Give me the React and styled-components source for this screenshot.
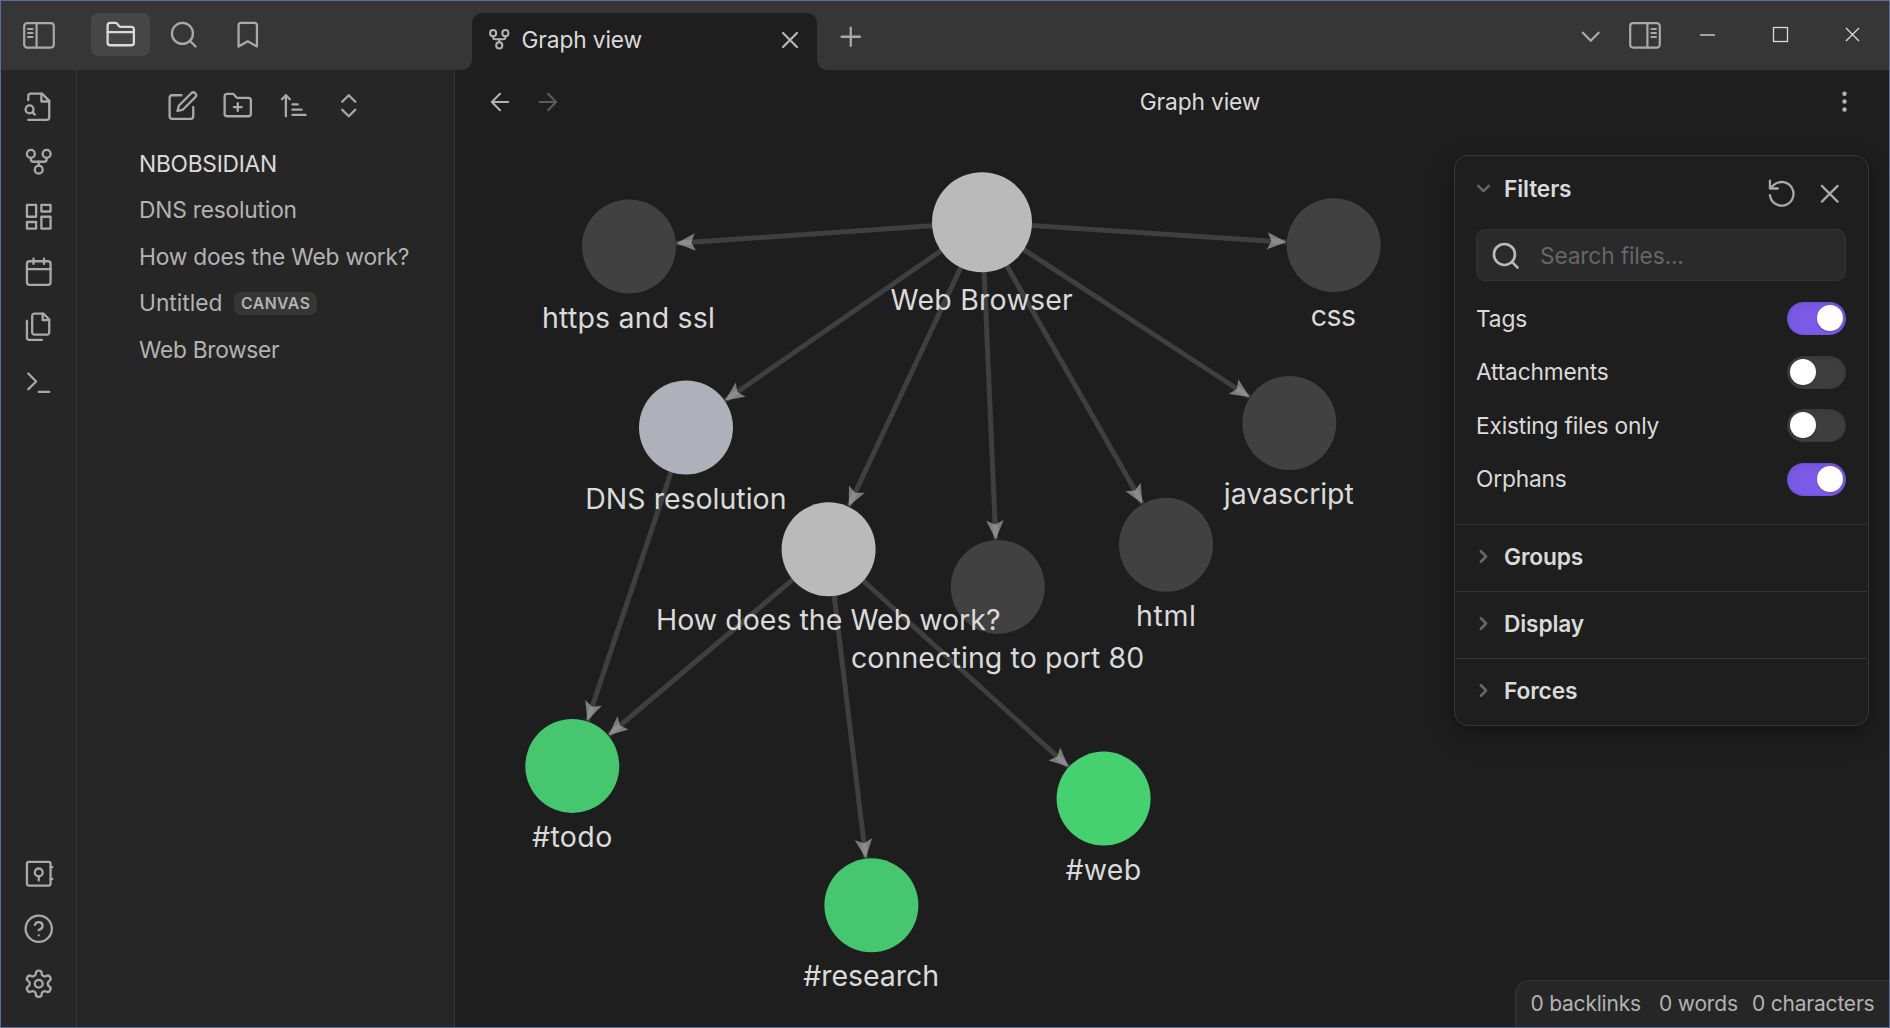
import React from "react";
import styled, { createGlobalStyle, css } from "styled-components";

const GlobalStyle = createGlobalStyle`
  *, *::before, *::after { box-sizing: border-box; }
  body {
    margin: 0;
    background: #1e1e1e;
    font-family: Inter, "Liberation Sans", sans-serif;
    overflow: hidden;
  }
`;

const c = {
  title: "#363636",
  side: "#262626",
  main: "#1e1e1e",
  line: "#363636",
  text: "#dadada",
  muted: "#b3b3b3",
  icon: "#a9a9a9",
  faint: "#666666",
  accent: "#7c5ae8",
};

/* ---------- icons ---------- */

const Svg = styled.svg`
  display: block;
  flex: none;
  width: ${(p) => p.$size}px;
  height: ${(p) => p.$size}px;
  fill: none;
  stroke: currentColor;
  stroke-width: ${(p) => p.$weight};
  stroke-linecap: round;
  stroke-linejoin: round;
`;

const paths = {
  fileSearch: (
    <>
      <path d="M4 22h14a2 2 0 0 0 2-2V7.5L14.5 2H6a2 2 0 0 0-2 2v3" />
      <path d="M14 2v6h6" />
      <circle cx="5" cy="14" r="3" />
      <path d="m9 18-1.5-1.5" />
    </>
  ),
  fork: (
    <>
      <circle cx="12" cy="18" r="3" />
      <circle cx="6" cy="6" r="3" />
      <circle cx="18" cy="6" r="3" />
      <path d="M18 9v1a2 2 0 0 1-2 2H8a2 2 0 0 1-2-2V9" />
      <path d="M12 12v3" />
    </>
  ),
  dashboard: (
    <>
      <rect x="3" y="3" width="7" height="9" />
      <rect x="14" y="3" width="7" height="5" />
      <rect x="14" y="12" width="7" height="9" />
      <rect x="3" y="16" width="7" height="5" />
    </>
  ),
  calendar: (
    <>
      <rect x="3" y="4" width="18" height="18" rx="2" />
      <path d="M16 2v4M8 2v4M3 10h18" />
    </>
  ),
  files: (
    <>
      <path d="M15.5 2H8.6c-.4 0-.8.2-1.1.5-.3.3-.5.7-.5 1.1v12.8c0 .4.2.8.5 1.1.3.3.7.5 1.1.5h9.8c.4 0 .8-.2 1.1-.5.3-.3.5-.7.5-1.1V6.5L15.5 2z" />
      <path d="M3 7.6v12.8c0 .4.2.8.5 1.1.3.3.7.5 1.1.5h9.8" />
      <path d="M15 2v5h5" />
    </>
  ),
  terminal: <path d="m4 17 6-6-6-6M12 19h8" />,
  vault: (
    <>
      <rect x="3" y="3" width="18" height="18" rx="1.5" />
      <circle cx="12" cy="11" r="3" />
      <path d="M12 14v3.2M21 7h1.3M21 16h1.3" />
    </>
  ),
  help: (
    <>
      <circle cx="12" cy="12" r="10" />
      <path d="M9.09 9a3 3 0 0 1 5.83 1c0 2-3 3-3 3M12 17h.01" />
    </>
  ),
  settings: (
    <>
      <path d="M12.22 2h-.44a2 2 0 0 0-2 2v.18a2 2 0 0 1-1 1.73l-.43.25a2 2 0 0 1-2 0l-.15-.08a2 2 0 0 0-2.73.73l-.22.38a2 2 0 0 0 .73 2.73l.15.1a2 2 0 0 1 1 1.72v.51a2 2 0 0 1-1 1.74l-.15.09a2 2 0 0 0-.73 2.73l.22.38a2 2 0 0 0 2.73.73l.15-.08a2 2 0 0 1 2 0l.43.25a2 2 0 0 1 1 1.73V20a2 2 0 0 0 2 2h.44a2 2 0 0 0 2-2v-.18a2 2 0 0 1 1-1.73l.43-.25a2 2 0 0 1 2 0l.15.08a2 2 0 0 0 2.73-.73l.22-.39a2 2 0 0 0-.73-2.73l-.15-.08a2 2 0 0 1-1-1.74v-.5a2 2 0 0 1 1-1.74l.15-.09a2 2 0 0 0 .73-2.73l-.22-.38a2 2 0 0 0-2.73-.73l-.15.08a2 2 0 0 1-2 0l-.43-.25a2 2 0 0 1-1-1.73V4a2 2 0 0 0-2-2z" />
      <circle cx="12" cy="12" r="3" />
    </>
  ),
  folder: (
    <>
      <path d="M4 20h16a2 2 0 0 0 2-2V8a2 2 0 0 0-2-2h-7.93a2 2 0 0 1-1.66-.9l-.82-1.2A2 2 0 0 0 7.93 3H4a2 2 0 0 0-2 2v13c0 1.1.9 2 2 2Z" />
      <path d="M2 10h20" />
    </>
  ),
  folderPlus: (
    <>
      <path d="M4 20h16a2 2 0 0 0 2-2V8a2 2 0 0 0-2-2h-7.93a2 2 0 0 1-1.66-.9l-.82-1.2A2 2 0 0 0 7.93 3H4a2 2 0 0 0-2 2v13c0 1.1.9 2 2 2Z" />
      <path d="M12 10v6M9 13h6" />
    </>
  ),
  search: (
    <>
      <circle cx="11" cy="11" r="8" />
      <path d="m21 21-4.3-4.3" />
    </>
  ),
  bookmark: <path d="m19 21-7-4-7 4V5a2 2 0 0 1 2-2h10a2 2 0 0 1 2 2v16z" />,
  edit: (
    <>
      <path d="M11 4H4a2 2 0 0 0-2 2v14a2 2 0 0 0 2 2h14a2 2 0 0 0 2-2v-7" />
      <path d="M18.5 2.5a2.121 2.121 0 0 1 3 3L12 15l-4 1 1-4 9.5-9.5z" />
    </>
  ),
  sort: <path d="M11 11h4M11 15h7M11 19h10M9 7 6 4 3 7M6 4v16" />,
  upDown: <path d="m7 15 5 5 5-5M7 9l5-5 5 5" />,
  close: <path d="M18 6 6 18M6 6l12 12" />,
  plus: <path d="M5 12h14M12 5v14" />,
  down: <path d="m6 9 6 6 6-6" />,
  right: <path d="m9 18 6-6-6-6" />,
  back: <path d="m12 19-7-7 7-7M19 12H5" />,
  forward: <path d="M5 12h14M12 5l7 7-7 7" />,
  more: (
    <>
      <circle cx="12" cy="12" r="1" />
      <circle cx="12" cy="5" r="1" />
      <circle cx="12" cy="19" r="1" />
    </>
  ),
  reset: <path d="M3 2v6h6M3 13a9 9 0 1 0 3-7.7L3 8" />,
};

const Icon = ({ name, size = 31.5, weight = 1.75 }) => (
  <Svg viewBox="0 0 24 24" $size={size} $weight={weight}>
    {paths[name]}
  </Svg>
);

const PanelSvg = styled.svg`
  display: block;
  flex: none;
  width: 32px;
  height: 27px;
  fill: none;
  stroke: currentColor;
  stroke-width: 2.2;
  stroke-linecap: round;
  transform: ${(p) => (p.$flip ? "scaleX(-1)" : "none")};
`;

const PanelIcon = ({ flip }) => (
  <PanelSvg viewBox="0 0 32 27" $flip={flip}>
    <rect x="1.2" y="1.2" width="29.6" height="24.4" rx="3" />
    <path d="M13.6 1.2v24.4" />
    <path d="M5 7h4.6M5 11h4.6M5 15h4.6" strokeWidth="2" />
  </PanelSvg>
);

/* ---------- window frame ---------- */

const Window = styled.div`
  width: 1890px;
  height: 1028px;
  border: 1px solid #5d6b9e;
  background: ${c.main};
  color: ${c.text};
  display: flex;
  flex-direction: column;
  font-size: 22.75px;
  letter-spacing: -0.2px;
  line-height: 30px;
`;

const TitleBar = styled.header`
  height: 69px;
  flex: none;
  display: flex;
  align-items: center;
  background: ${c.title};
  color: ${c.icon};
`;

const TitleLeft = styled.div`
  width: 471px;
  flex: none;
  display: flex;
  align-items: center;
  padding-left: 22px;
`;

const SideTabs = styled.div`
  display: flex;
  gap: 4.7px;
  margin: 0 0 2px 36px;
`;

const SideTab = styled.button`
  width: 59px;
  height: 43px;
  padding: 0;
  border: 0;
  border-radius: 7px;
  display: grid;
  place-items: center;
  background: ${(p) => (p.$active ? "#464646" : "transparent")};
  color: ${(p) => (p.$active ? c.text : c.icon)};
`;

const flare = css`
  content: "";
  position: absolute;
  bottom: 0;
  width: 10px;
  height: 10px;
`;

const Tab = styled.div`
  position: relative;
  align-self: flex-end;
  width: 345px;
  height: 57px;
  padding: 0 13px 4px 15px;
  display: flex;
  align-items: center;
  gap: 10px;
  border-radius: 10px 10px 0 0;
  background: ${c.main};
  color: ${c.muted};
  &::before {
    ${flare}
    right: 100%;
    background: radial-gradient(circle at 0 0, transparent 9.5px, ${c.main} 10px);
  }
  &::after {
    ${flare}
    left: 100%;
    background: radial-gradient(circle at 100% 0, transparent 9.5px, ${c.main} 10px);
  }
`;

const TabLabel = styled.span`
  flex: 1;
  color: ${c.text};
  letter-spacing: -0.14px;
`;

const NewTab = styled.div`
  margin: 2px 0 0 17.7px;
`;

const TitleRight = styled.div`
  margin-left: auto;
  display: flex;
  align-items: center;
`;

const TabList = styled.div`
  margin: 2px 23px 0 0;
`;

const WindowButtons = styled.div`
  display: flex;
  margin: 0 0 2px 10.5px;
  color: ${c.text};
`;

const WindowButton = styled.div`
  width: 72.5px;
  height: 33px;
  display: grid;
  place-items: center;
`;

const WinSvg = styled.svg`
  display: block;
  width: 17px;
  height: 17px;
  fill: none;
  stroke: currentColor;
  stroke-width: 1.3;
`;

const Body = styled.div`
  flex: 1;
  min-height: 0;
  display: flex;
`;

/* ---------- ribbon ---------- */

const Ribbon = styled.nav`
  width: 76px;
  flex: none;
  border-right: 1px solid ${c.line};
  background: ${c.side};
  color: ${c.icon};
  display: flex;
  flex-direction: column;
  justify-content: space-between;
  align-items: center;
  padding: 20.6px 0 27.75px;
`;

const RibbonGroup = styled.div`
  display: flex;
  flex-direction: column;
  gap: ${(p) => p.$gap}px;
`;

/* ---------- file explorer ---------- */

const Sidebar = styled.aside`
  width: 378px;
  flex: none;
  border-right: 1px solid ${c.line};
  background: ${c.side};
  padding-top: 20.4px;
`;

const SidebarTools = styled.div`
  display: flex;
  justify-content: center;
  gap: 23.9px;
  padding-left: 0.6px;
  color: ${c.icon};
`;

const FileList = styled.div`
  padding: 18.6px 0 0 62px;
`;

const FileRow = styled.div`
  height: 46.5px;
  display: flex;
  align-items: center;
  gap: 12px;
  color: ${(p) => (p.$root ? c.text : c.muted)};
`;

const FileName = styled.span`
  letter-spacing: ${(p) => (p.$spacing === undefined ? -0.2 : p.$spacing)}px;
`;

const Badge = styled.span`
  height: 23px;
  padding: 0 6.5px;
  border-radius: 7px;
  background: ${c.line};
  font-size: 15.75px;
  font-weight: 600;
  line-height: 23px;
  letter-spacing: 0.5px;
`;

/* ---------- graph pane ---------- */

const Pane = styled.main`
  flex: 1;
  min-width: 0;
  position: relative;
  display: flex;
  flex-direction: column;
`;

const ViewHeader = styled.div`
  height: 63px;
  flex: none;
  display: flex;
  align-items: center;
  padding: 0 31px;
  color: ${c.muted};
`;

const NavButtons = styled.div`
  display: flex;
  gap: 20px;
`;

const NavButton = styled.div`
  color: ${(p) => (p.$disabled ? "#5c5c5c" : c.muted)};
`;

const ViewTitle = styled.div`
  flex: 1;
  padding-left: 7px;
  text-align: center;
  color: ${c.text};
  letter-spacing: -0.14px;
`;

const GraphSvg = styled.svg`
  display: block;
  flex: 1;
  width: 1434px;
  height: 894px;
`;

const Label = styled.text`
  font-size: 28.5px;
  letter-spacing: 0;
  text-anchor: middle;
  fill: ${c.text};
`;

const nodes = {
  browser: { x: 982, y: 222.3, r: 50, fill: "#bababa", label: "Web Browser", lx: 981.7, ly: 309.6, w: 182.2 },
  https: { x: 629, y: 246.5, r: 47, fill: "#414141", label: "https and ssl", lx: 628.5, ly: 327.5, w: 173 },
  css: { x: 1333.7, y: 245.2, r: 47, fill: "#414141", label: "css", lx: 1333.4, ly: 326.2, w: 45.5 },
  dns: { x: 686, y: 427.5, r: 47, fill: "#b0b0ba", label: "DNS resolution", lx: 685.9, ly: 508.7, w: 201.2 },
  js: { x: 1289.3, y: 423, r: 47, fill: "#414141", label: "javascript", lx: 1288.8, ly: 503.8, w: 130 },
  port: { x: 997.8, y: 586.9, r: 47, fill: "#414141", label: "connecting to port 80", lx: 997.6, ly: 667.8, w: 293.4 },
  html: { x: 1166, y: 544.8, r: 47, fill: "#414141", label: "html", lx: 1165.9, ly: 625.7, w: 60 },
  how: { x: 828.6, y: 549.3, r: 47, fill: "#bababa", label: "How does the Web work?", lx: 828.3, ly: 629.9, w: 344.5 },
  todo: { x: 572.3, y: 765.9, r: 47, fill: "#47c670", label: "#todo", lx: 572.1, ly: 846.7, w: 80.3 },
  research: { x: 871.4, y: 905.3, r: 47, fill: "#47c670", label: "#research", lx: 871.2, ly: 986, w: 135.8 },
  web: { x: 1103.6, y: 798.6, r: 47, fill: "#46d171", label: "#web", lx: 1103.3, ly: 879.7, w: 75.8 },
};

const links = [
  ["browser", "https"],
  ["browser", "css"],
  ["browser", "dns"],
  ["browser", "js"],
  ["browser", "how"],
  ["browser", "port"],
  ["browser", "html"],
  ["dns", "todo"],
  ["how", "todo"],
  ["how", "research"],
  ["how", "web"],
];

const Link = ({ from, to }) => {
  const a = nodes[from];
  const b = nodes[to];
  const angle = Math.atan2(b.y - a.y, b.x - a.x);
  const tipX = b.x - Math.cos(angle) * (b.r + 0.5);
  const tipY = b.y - Math.sin(angle) * (b.r + 0.5);
  return (
    <g>
      <line x1={a.x} y1={a.y} x2={tipX} y2={tipY} stroke="#3f3f3f" strokeWidth="5" />
      <path
        d="M0 0-19-8.7-15 0-19 8.7Z"
        fill="#dadada"
        fillOpacity="0.5"
        transform={`translate(${tipX} ${tipY}) rotate(${(angle * 180) / Math.PI})`}
      />
    </g>
  );
};

const Graph = () => (
  <GraphSvg viewBox="455 133 1434 894">
    {links.map(([from, to]) => (
      <Link key={from + to} from={from} to={to} />
    ))}
    {Object.entries(nodes).map(([id, n]) => (
      <circle key={id} cx={n.x} cy={n.y} r={n.r} fill={n.fill} />
    ))}
    {Object.entries(nodes).map(([id, n]) => (
      <Label key={id} x={n.lx} y={n.ly} textLength={n.w}>
        {n.label}
      </Label>
    ))}
  </GraphSvg>
);

/* ---------- graph controls ---------- */

const Controls = styled.section`
  position: absolute;
  top: 85px;
  right: 20px;
  width: 415px;
  height: 571px;
  padding: 0 1px;
  border: 1px solid ${c.line};
  border-radius: 14px;
  background: ${c.main};
  box-shadow: 0 3px 6px rgba(0, 0, 0, 0.12), 0 10px 28px rgba(0, 0, 0, 0.28);
`;

const FilterSection = styled.div`
  height: 368px;
  padding: 0 21px 0 20px;
`;

const FilterHeader = styled.div`
  height: 73px;
  display: flex;
  justify-content: space-between;
  align-items: flex-start;
`;

const SectionTitle = styled.div`
  display: flex;
  align-items: center;
  gap: 10px;
  margin-left: -3px;
  color: ${c.faint};
  padding-top: ${(p) => p.$top || 0}px;
`;

const SectionLabel = styled.span`
  color: ${c.text};
  font-weight: 600;
  letter-spacing: -0.15px;
`;

const FilterActions = styled.div`
  display: flex;
  gap: 16.5px;
  padding: 21.6px 0.4px 0 0;
  color: ${c.icon};
`;

const SearchBox = styled.div`
  height: 52px;
  padding: 1px 13px 0 12.7px;
  display: flex;
  align-items: center;
  gap: 18.8px;
  border: 1px solid #333333;
  border-radius: 9px;
  background: #2a2a2a;
  color: #bababa;
`;

const Placeholder = styled.span`
  color: ${c.faint};
  letter-spacing: -0.17px;
`;

const Options = styled.div`
  padding-top: 10.8px;
`;

const Option = styled.div`
  height: 53.5px;
  display: flex;
  align-items: center;
  justify-content: space-between;
`;

const Toggle = styled.div`
  width: 59px;
  height: 33px;
  padding: 3px 3.5px 3px 3px;
  display: flex;
  justify-content: ${(p) => (p.$on ? "flex-end" : "flex-start")};
  border-radius: 17px;
  background: ${(p) => (p.$on ? c.accent : "#3f3f3f")};
  box-shadow: inset 0 4px 9px rgba(0, 0, 0, 0.07), inset 0 0 2px rgba(0, 0, 0, 0.21);
`;

const Thumb = styled.div`
  width: 26px;
  height: 26px;
  border-radius: 50%;
  background: #ffffff;
  box-shadow: 0 1px 2px rgba(0, 0, 0, 0.2);
`;

const Section = styled.div`
  height: 67px;
  padding: 0 20px 3px;
  display: flex;
  align-items: center;
  border-top: 1px solid ${c.line};
`;

const options = [
  ["Tags", true],
  ["Attachments", false],
  ["Existing files only", false],
  ["Orphans", true],
];

/* ---------- status bar ---------- */

const StatusBar = styled.footer`
  position: absolute;
  right: 0;
  bottom: 0;
  width: 374px;
  height: 47px;
  padding-left: 14.4px;
  display: flex;
  align-items: center;
  border: 1px solid ${c.line};
  border-width: 1px 0 0 1px;
  border-radius: 14px 0 0 0;
  background: ${c.side};
  color: ${c.muted};
  font-size: 21px;
  white-space: nowrap;
`;

const StatusItem = styled.span`
  margin-right: ${(p) => p.$after}px;
`;

export default function App() {
  return (
    <>
      <GlobalStyle />
      <Window>
        <TitleBar>
          <TitleLeft>
            <PanelIcon />
            <SideTabs>
              <SideTab $active><Icon name="folder" /></SideTab>
              <SideTab><Icon name="search" /></SideTab>
              <SideTab><Icon name="bookmark" /></SideTab>
            </SideTabs>
          </TitleLeft>
          <Tab>
            <Icon name="fork" size={24.5} weight={2} />
            <TabLabel>Graph view</TabLabel>
            <Icon name="close" size={28} weight={2} />
          </Tab>
          <NewTab><Icon name="plus" /></NewTab>
          <TitleRight>
            <TabList><Icon name="down" /></TabList>
            <PanelIcon flip />
            <WindowButtons>
              <WindowButton>
                <WinSvg viewBox="0 0 17 17"><path d="M1 9h15" /></WinSvg>
              </WindowButton>
              <WindowButton>
                <WinSvg viewBox="0 0 17 17"><rect x="1.5" y="1.5" width="14" height="14" /></WinSvg>
              </WindowButton>
              <WindowButton>
                <WinSvg viewBox="0 0 17 17"><path d="m2 2 13 13M15 2 2 15" /></WinSvg>
              </WindowButton>
            </WindowButtons>
          </TitleRight>
        </TitleBar>
        <Body>
          <Ribbon>
            <RibbonGroup $gap={23.7}>
              <Icon name="fileSearch" />
              <Icon name="fork" />
              <Icon name="dashboard" />
              <Icon name="calendar" />
              <Icon name="files" />
              <Icon name="terminal" />
            </RibbonGroup>
            <RibbonGroup $gap={23.4}>
              <Icon name="vault" />
              <Icon name="help" />
              <Icon name="settings" />
            </RibbonGroup>
          </Ribbon>
          <Sidebar>
            <SidebarTools>
              <Icon name="edit" />
              <Icon name="folderPlus" />
              <Icon name="sort" />
              <Icon name="upDown" />
            </SidebarTools>
            <FileList>
              <FileRow $root><FileName $spacing={-0.25}>NBOBSIDIAN</FileName></FileRow>
              <FileRow><FileName>DNS resolution</FileName></FileRow>
              <FileRow><FileName>How does the Web work?</FileName></FileRow>
              <FileRow>
                <FileName $spacing={0}>Untitled</FileName>
                <Badge>CANVAS</Badge>
              </FileRow>
              <FileRow><FileName $spacing={-0.3}>Web Browser</FileName></FileRow>
            </FileList>
          </Sidebar>
          <Pane>
            <ViewHeader>
              <NavButtons>
                <NavButton><Icon name="back" size={28} /></NavButton>
                <NavButton $disabled><Icon name="forward" size={28} /></NavButton>
              </NavButtons>
              <ViewTitle>Graph view</ViewTitle>
              <Icon name="more" size={27} weight={2} />
            </ViewHeader>
            <Graph />
            <Controls>
              <FilterSection>
                <FilterHeader>
                  <SectionTitle $top={17.7}>
                    <Icon name="down" size={21} weight={3} />
                    <SectionLabel>Filters</SectionLabel>
                  </SectionTitle>
                  <FilterActions>
                    <Icon name="reset" />
                    <Icon name="close" />
                  </FilterActions>
                </FilterHeader>
                <SearchBox>
                  <Icon name="search" weight={2} />
                  <Placeholder>Search files...</Placeholder>
                </SearchBox>
                <Options>
                  {options.map(([label, on]) => (
                    <Option key={label}>
                      {label}
                      <Toggle $on={on}><Thumb /></Toggle>
                    </Option>
                  ))}
                </Options>
              </FilterSection>
              {["Groups", "Display", "Forces"].map((label) => (
                <Section key={label}>
                  <SectionTitle>
                    <Icon name="right" size={21} weight={3} />
                    <SectionLabel>{label}</SectionLabel>
                  </SectionTitle>
                </Section>
              ))}
            </Controls>
            <StatusBar>
              <StatusItem $after={18.2}>0 backlinks</StatusItem>
              <StatusItem $after={14.2}>0 words</StatusItem>
              <StatusItem $after={0}>0 characters</StatusItem>
            </StatusBar>
          </Pane>
        </Body>
      </Window>
    </>
  );
}
